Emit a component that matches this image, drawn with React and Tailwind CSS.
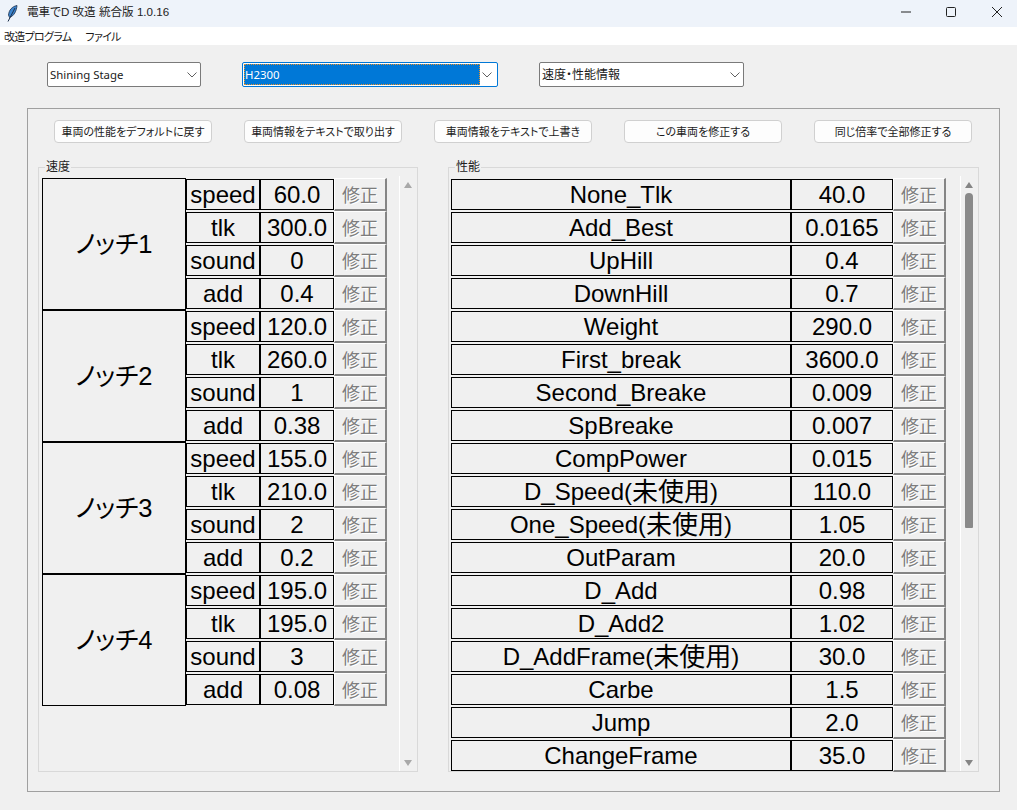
const NOTCHES = [
  { name: 'ノッチ1', rows: [['speed', '60.0'], ['tlk', '300.0'], ['sound', '0'], ['add', '0.4']] },
  { name: 'ノッチ2', rows: [['speed', '120.0'], ['tlk', '260.0'], ['sound', '1'], ['add', '0.38']] },
  { name: 'ノッチ3', rows: [['speed', '155.0'], ['tlk', '210.0'], ['sound', '2'], ['add', '0.2']] },
  { name: 'ノッチ4', rows: [['speed', '195.0'], ['tlk', '195.0'], ['sound', '3'], ['add', '0.08']] },
];

const PERFORMANCE = [
  ['None_Tlk', '40.0'],
  ['Add_Best', '0.0165'],
  ['UpHill', '0.4'],
  ['DownHill', '0.7'],
  ['Weight', '290.0'],
  ['First_break', '3600.0'],
  ['Second_Breake', '0.009'],
  ['SpBreake', '0.007'],
  ['CompPower', '0.015'],
  ['D_Speed(未使用)', '110.0'],
  ['One_Speed(未使用)', '1.05'],
  ['OutParam', '20.0'],
  ['D_Add', '0.98'],
  ['D_Add2', '1.02'],
  ['D_AddFrame(未使用)', '30.0'],
  ['Carbe', '1.5'],
  ['Jump', '2.0'],
  ['ChangeFrame', '35.0'],
];

const ACTIONS = [
  '車両の性能をデフォルトに戻す',
  '車両情報をテキストで取り出す',
  '車両情報をテキストで上書き',
  'この車両を修正する',
  '同じ倍率で全部修正する',
];

function Chevron() {
  return (
    <svg width="10" height="6" viewBox="0 0 10 6" className="shrink-0">
      <path d="M0.5 0.5 L5 5 L9.5 0.5" fill="none" stroke="#606060" strokeWidth="1" />
    </svg>
  );
}

function Combo({ label, className, textClass }) {
  return (
    <div className={`h-[25px] flex items-center justify-between bg-white border border-[#7a7a7a] rounded-[2px] pl-[2px] pr-[3px] text-[#1a1a1a] ${className}`}>
      <span className={textClass}>{label}</span>
      <Chevron />
    </div>
  );
}

function Cell({ children, className }) {
  return (
    <div className={`h-[31px] flex items-center justify-center border border-black text-[24px] leading-none text-black ${className}`}>
      {children}
    </div>
  );
}

function FixButton() {
  return (
    <div className="w-[53px] h-[33px] shrink-0 flex items-center justify-center pt-[3px] border-t border-l border-t-white border-l-white border-b-2 border-r-2 border-b-[#858585] border-r-[#858585] text-[18px] leading-none text-[#7d7d7d] [text-shadow:1px_1px_0_#ffffff]">
      修正
    </div>
  );
}

function Scrollbar({ arrow, thumb, className }) {
  return (
    <div className={`h-[595px] mt-[-2px] border-l border-l-white flex flex-col items-start pl-[4px] ${className}`}>
      <svg width="8" height="6" viewBox="0 0 8 6" className="mt-[6px] shrink-0">
        <path d="M4 0 L8 6 L0 6 Z" fill={arrow} />
      </svg>
      {thumb && <div className="w-[8px] h-[335px] mt-[5px] bg-[#8a8a8a] rounded-t-[4px] rounded-b-[1px]" />}
      <svg width="8" height="6" viewBox="0 0 8 6" className="mt-auto mb-[5px] shrink-0">
        <path d="M0 0 L8 0 L4 6 Z" fill={arrow} />
      </svg>
    </div>
  );
}

function Panel({ title, className, children }) {
  return (
    <div className={`relative h-[605px] border border-[#d9d9d9] flex ${className}`}>
      <span className="absolute top-[-8px] left-[6px] px-[1px] bg-[#f0f0f0] text-[12px] leading-[14px] text-[#222222]">
        {title}
      </span>
      {children}
    </div>
  );
}

// the kanji in these labels come out a little larger than the latin text around them
function ParamLabel({ label }) {
  if (!label.includes('(未使用)')) return label;
  return (
    <>
      {label.replace('未使用)', '')}
      <span className="text-[26px]">未使用</span>)
    </>
  );
}

export default function App() {
  return (
    <div className="w-[1017px] h-[810px] flex flex-col overflow-hidden bg-[#f0f0f0] font-['Liberation_Sans','Noto_Sans_CJK_JP',sans-serif]">
      {/* title bar */}
      <div className="h-[27px] shrink-0 flex items-center bg-[#eef3fa] pl-[7px] pb-[3px] text-[11.6px] text-[#222222]">
        <svg width="11" height="17" viewBox="0 0 11 17" className="shrink-0 mt-[3px]">
          <path d="M10 0.5 C5 1.5 2 5 1.5 10 L2.5 12.5 C7 11 9.5 6 10 0.5 Z" fill="#3d86d0" stroke="#1c2f4a" strokeWidth="0.8" />
          <path d="M8 3 L1 16.5" stroke="#1c2f4a" strokeWidth="1" fill="none" />
        </svg>
        <span className="ml-[9px] [font-feature-settings:'palt']">電車でD 改造 統合版 1.0.16</span>
        <svg width="10" height="2" viewBox="0 0 10 2" className="ml-auto shrink-0">
          <path d="M0 1 H10" stroke="#222222" strokeWidth="1" />
        </svg>
        <svg width="10" height="10" viewBox="0 0 10 10" className="ml-[35px] shrink-0">
          <rect x="0.5" y="0.5" width="9" height="9" rx="1" fill="none" stroke="#222222" strokeWidth="1" />
        </svg>
        <svg width="10" height="10" viewBox="0 0 10 10" className="ml-[36px] mr-[15px] shrink-0">
          <path d="M0 0 L10 10 M10 0 L0 10" stroke="#222222" strokeWidth="1" />
        </svg>
      </div>

      {/* menu */}
      <div className="h-[18px] shrink-0 flex items-center gap-[14px] bg-white pl-[4px] pt-[2px] text-[11px] tracking-[-0.7px] text-[#1a1a1a] [font-feature-settings:'palt']">
        <span>改造プログラム</span>
        <span>ファイル</span>
      </div>

      {/* selectors */}
      <div className="flex gap-[41px] pt-[17px] pl-[47px] shrink-0 font-['Noto_Sans','Noto_Sans_CJK_JP',sans-serif] [font-feature-settings:'palt']">
        <Combo label="Shining Stage" className="w-[154px]" textClass="text-[11.4px]" />
        <div className="w-[256px] h-[25px] flex items-center bg-white border border-[#0078d7] rounded-[2px] pl-[1px] pr-[3px]">
          <div className="w-[236px] h-[21px] flex items-center bg-[#0078d7] border border-dotted border-[#e8912a] text-[11.4px] text-white">
            H2300
          </div>
          <div className="flex-1 flex justify-center">
            <Chevron />
          </div>
        </div>
        <Combo label="速度・性能情報" className="w-[205px]" textClass="text-[12px]" />
      </div>

      {/* main frame */}
      <div className="w-[973px] h-[684px] ml-[27px] mt-[21px] shrink-0 border border-[#a0a0a0]">
        <div className="flex gap-[32px] pt-[11px] pl-[26px] font-['Noto_Sans_CJK_JP',sans-serif] [font-feature-settings:'palt']">
          {ACTIONS.map(action => (
            <div
              key={action}
              className="w-[158px] h-[23px] flex items-center justify-center bg-[#fdfdfd] border border-[#d0d0d0] rounded-[4px] text-[11px] whitespace-nowrap text-[#1a1a1a]"
            >
              {action}
            </div>
          ))}
        </div>

        <div className="flex gap-[30px] mt-[24px] pl-[10px]">
          <Panel title="速度" className="w-[380px]">
            <div className="w-[360px] pl-[3px] pt-[10px] shrink-0">
              {NOTCHES.map(notch => (
                <div key={notch.name} className="flex">
                  <div className="w-[144px] h-[132px] flex items-center justify-center pt-[1px] border border-black text-[25.5px] text-black [font-feature-settings:'palt']">
                    {notch.name}
                  </div>
                  <div className="flex flex-col">
                    {notch.rows.map(([label, value]) => (
                      <div key={label} className="flex items-center h-[33px]">
                        <Cell className="w-[74px]">{label}</Cell>
                        <Cell className="w-[74px]">{value}</Cell>
                        <FixButton />
                      </div>
                    ))}
                  </div>
                </div>
              ))}
            </div>
            <div className="pt-[10px]">
              <Scrollbar arrow="#a8a8a8" className="w-[18px]" />
            </div>
          </Panel>

          <Panel title="性能" className="w-[531px]">
            <div className="w-[511px] pl-[2px] pt-[10px] shrink-0">
              {PERFORMANCE.map(([label, value]) => (
                <div key={label} className="flex items-center h-[33px]">
                  <Cell className="w-[340px]"><ParamLabel label={label} /></Cell>
                  <Cell className="w-[102px]">{value}</Cell>
                  <FixButton />
                </div>
              ))}
            </div>
            <div className="pt-[10px]">
              <Scrollbar arrow="#858585" thumb className="w-[18px]" />
            </div>
          </Panel>
        </div>
      </div>
    </div>
  );
}
